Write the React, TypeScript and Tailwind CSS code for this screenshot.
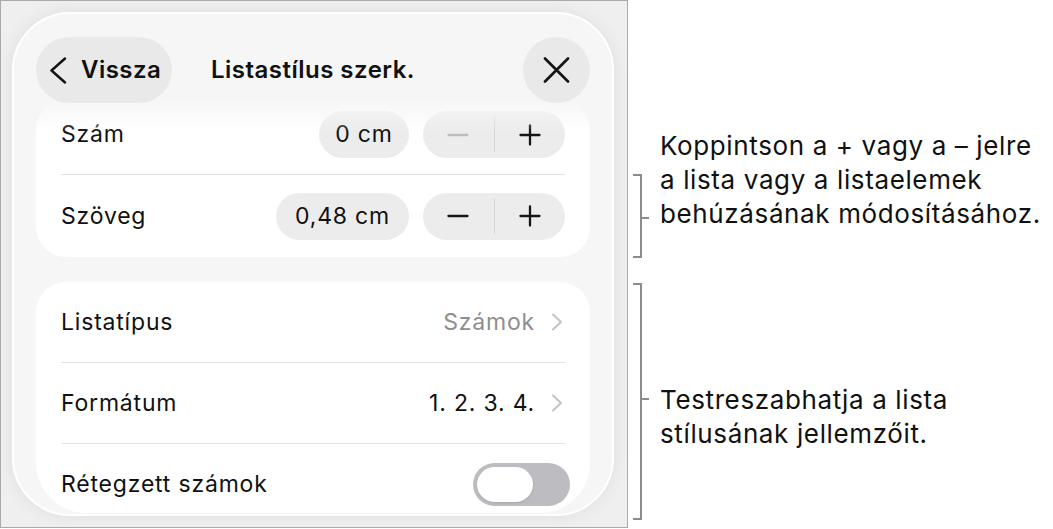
import React from "react";

const ink = "text-[#111111]";
const rowText = "text-[23px] tracking-[0.035em]";

function Plus({ className = "" }: { className?: string }) {
  return (
    <svg width="22" height="22" viewBox="0 0 22 22" className={className}>
      <path d="M11 1.5v19M1.5 11h19" stroke="currentColor" strokeWidth="2.3" strokeLinecap="round" fill="none" />
    </svg>
  );
}

function Minus({ className = "" }: { className?: string }) {
  return (
    <svg width="22" height="22" viewBox="0 0 22 22" className={className}>
      <path d="M1.5 11h19" stroke="currentColor" strokeWidth="2.3" strokeLinecap="round" fill="none" />
    </svg>
  );
}

function ChevronRight() {
  return (
    <svg width="12" height="18" viewBox="0 0 12 18" className="text-[#c4c4c8]">
      <polyline points="2,1.5 10,9 2,16.5" stroke="currentColor" strokeWidth="2" fill="none" strokeLinecap="round" strokeLinejoin="round" />
    </svg>
  );
}

function Stepper({ minusDisabled }: { minusDisabled?: boolean }) {
  return (
    <div className="flex items-center w-[142px] h-[47px] rounded-full bg-[#ececec]">
      <div className="flex-1 flex items-center justify-center">
        <Minus className={minusDisabled ? "text-[#bdbdbd]" : "text-[#151515]"} />
      </div>
      <div className="w-px h-[35px] bg-[#d6d6d6]" />
      <div className="flex-1 flex items-center justify-center">
        <Plus className="text-[#151515]" />
      </div>
    </div>
  );
}

function ValuePill({ value, width }: { value: string; width: string }) {
  return (
    <div className={`${width} h-[47px] rounded-full bg-[#ececec] flex items-center justify-center ${rowText} ${ink}`}>
      {value}
    </div>
  );
}

function Divider() {
  return <div className="mx-[25px] h-px bg-[#e2e2e2]" />;
}

function Bracket({ top, height, mid }: { top: string; height: string; mid: string }) {
  return (
    <>
      <div className={`absolute left-[5px] ${top} ${height} w-[9px] border-t-2 border-r-2 border-b-2 border-[#8c8c8c]`} />
      <div className={`absolute left-[14px] ${mid} w-[7px] h-[2px] bg-[#8c8c8c]`} />
    </>
  );
}

export default function App() {
  return (
    <div className="w-[1053px] h-[529px] bg-white flex font-['Inter','Noto_Sans',sans-serif]">
      {/* screenshot frame */}
      <div className="w-[628px] h-[528px] border border-[#ababab] bg-[#efefef] p-[11px]">
        <div className="relative w-[602px] h-[504px] rounded-[58px] border-2 border-white bg-[#f6f6f6] overflow-hidden shadow-[0_0_18px_rgba(0,0,0,0.07)]">
          {/* scrolling content */}
          <div className="pt-[86px] px-[22px]">
            <div className="bg-white rounded-[30px]">
              <div className="flex items-center h-[74px] pb-[5px] px-[25px]">
                <span className={`${rowText} ${ink}`}>Szám</span>
                <div className="ml-auto flex items-center gap-[14px]">
                  <ValuePill value="0 cm" width="w-[90px]" />
                  <Stepper minusDisabled />
                </div>
              </div>
              <Divider />
              <div className="flex items-center h-[82px] px-[25px]">
                <span className={`${rowText} ${ink}`}>Szöveg</span>
                <div className="ml-auto flex items-center gap-[14px]">
                  <ValuePill value="0,48 cm" width="w-[133px]" />
                  <Stepper />
                </div>
              </div>
            </div>

            <div className="mt-[25px] bg-white rounded-t-[30px] rounded-b-[50px] h-[231px] overflow-hidden">
              <div className="flex items-center h-[80px] pl-[25px] pr-[27px]">
                <span className={`${rowText} ${ink}`}>Listatípus</span>
                <div className="ml-auto flex items-center gap-[16px]">
                  <span className={`${rowText} text-[#8e8e92]`}>Számok</span>
                  <ChevronRight />
                </div>
              </div>
              <Divider />
              <div className="flex items-center h-[80px] pl-[25px] pr-[27px]">
                <span className={`${rowText} ${ink}`}>Formátum</span>
                <div className="ml-auto flex items-center gap-[16px]">
                  <span className={`${rowText} ${ink}`}>1. 2. 3. 4.</span>
                  <ChevronRight />
                </div>
              </div>
              <Divider />
              <div className="flex items-center h-[81px] pl-[25px] pr-[20px]">
                <span className={`${rowText} ${ink}`}>Rétegzett számok</span>
                <div className="ml-auto w-[97px] h-[43px] rounded-full bg-[#bcbcc1] p-[4px] flex">
                  <div className="w-[56px] h-[35px] rounded-full bg-white shadow-[0_1px_2px_rgba(0,0,0,0.12)]" />
                </div>
              </div>
            </div>
          </div>

          {/* header overlay with fade */}
          <div className="absolute inset-x-0 top-0 h-[118px] bg-linear-to-b from-[#f6f6f6] from-[72%] to-[#f6f6f6]/0 pointer-events-none" />
          <div className="absolute inset-x-0 top-[23px] px-[22px] grid grid-cols-[1fr_auto_1fr] items-center">
            <div className="justify-self-start flex items-center h-[66px] w-[136px] rounded-full bg-[#e9e9e9] pl-[13px]">
              <svg width="18" height="27" viewBox="0 0 18 27" className="text-[#151515]">
                <polyline points="16,1.5 2.5,13.5 16,25.5" stroke="currentColor" strokeWidth="2.5" fill="none" strokeLinecap="round" strokeLinejoin="round" />
              </svg>
              <span className={`ml-[14px] text-[24px] tracking-[0.02em] font-semibold ${ink}`}>Vissza</span>
            </div>
            <div className={`text-[24px] tracking-[0.02em] font-semibold ${ink}`}>Listastílus szerk.</div>
            <div className="justify-self-end w-[67px] h-[66px] rounded-full bg-[#e9e9e9] flex items-center justify-center">
              <svg width="27" height="26" viewBox="0 0 27 26" className="text-[#151515]">
                <path d="M2 1.5L25 24.5M25 1.5L2 24.5" stroke="currentColor" strokeWidth="2.7" strokeLinecap="round" fill="none" />
              </svg>
            </div>
          </div>
        </div>
      </div>

      {/* callouts */}
      <div className="relative flex-1 pl-[32px] text-[26px] leading-[34px] tracking-[0.024em] text-[#111111]">
        <Bracket top="top-[174px]" height="h-[84px]" mid="top-[217px]" />
        <Bracket top="top-[283px]" height="h-[237px]" mid="top-[398px]" />
        <p className="mt-[129px] whitespace-nowrap">
          Koppintson a + vagy a – jelre
          <br />a lista vagy a listaelemek
          <br />
          behúzásának módosításához.
        </p>
        <p className="mt-[152px] whitespace-nowrap">
          Testreszabhatja a lista
          <br />
          stílusának jellemzőit.
        </p>
      </div>
    </div>
  );
}
